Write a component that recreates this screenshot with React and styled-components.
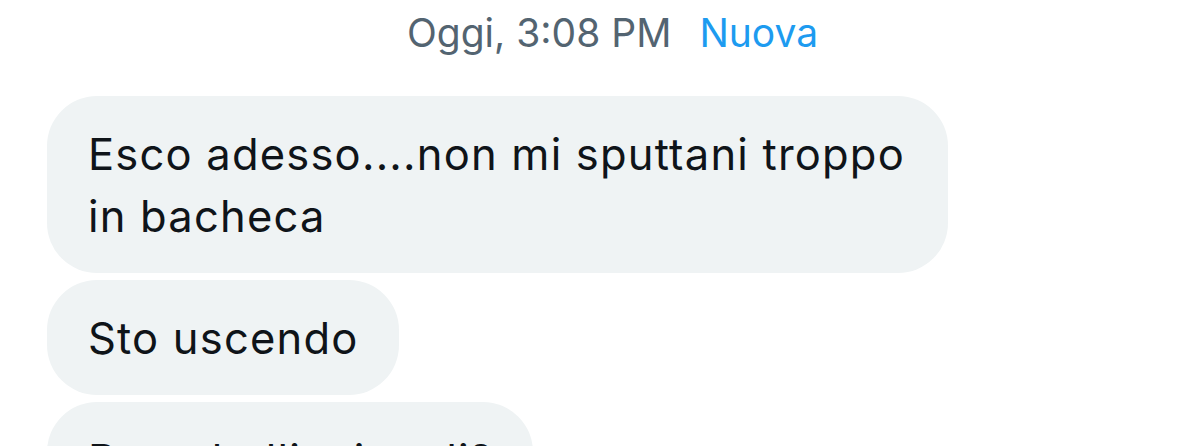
import React from 'react';
import styled, { createGlobalStyle } from 'styled-components';

const GlobalStyle = createGlobalStyle`
  html, body {
    margin: 0;
    padding: 0;
    background: #ffffff;
  }
  body {
    font-family: Inter, Roboto, sans-serif;
    overflow: hidden;
  }
`;

const Thread = styled.div`
  display: flex;
  flex-direction: column;
  align-items: flex-start;
  padding: 9px 0 0 47px;
  height: 446px;
  box-sizing: border-box;
`;

const DateRow = styled.div`
  align-self: stretch;
  display: flex;
  justify-content: center;
  gap: 28px;
  padding-right: 22px;
  margin-bottom: 39px;
  font-size: 39px;
  line-height: 48px;
  color: #536471;
`;

const NewTag = styled.span`
  color: #1d9bf0;
`;

const Bubble = styled.div`
  max-width: 820px;
  padding: 27px 40px 26px 41px;
  margin-bottom: 7px;
  border-radius: 50px;
  background: #eff3f4;
  color: #0f1419;
  font-size: 43.5px;
  letter-spacing: 1.2px;
  line-height: 62px;
  flex-shrink: 0;
`;

const messages = [
  'Esco adesso....non mi sputtani troppo in bacheca',
  'Sto uscendo',
  'Dove balli mi vedi?',
];

export default function App() {
  return (
    <>
      <GlobalStyle />
      <Thread>
        <DateRow>
          <span>Oggi, 3:08 PM</span>
          <NewTag>Nuova</NewTag>
        </DateRow>
        {messages.map((m) => (
          <Bubble key={m}>{m}</Bubble>
        ))}
      </Thread>
    </>
  );
}
